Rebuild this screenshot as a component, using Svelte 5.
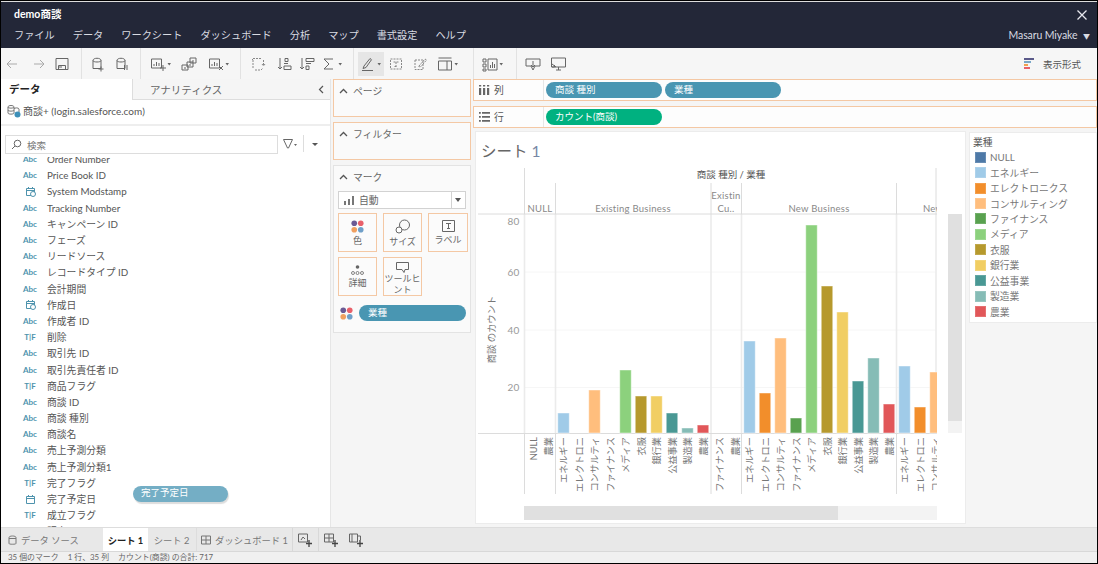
<script>
  const menus = ['ファイル','データ','ワークシート','ダッシュボード','分析','マップ','書式設定','ヘルプ'];
  const tools = [
    {c:12,light:1,d:'M13 8H3M7 4L3 8l4 4'},
    {c:39,light:1,d:'M3 8h10M9 4l4 4-4 4'},
    {c:62,d:'M2 2.5h12v11H2zM4.5 13.5v-4h7v4M5 11h3'},
    {c:81,sep:1},
    {c:98,d:'M3 4.5c0-3 8-3 8 0v8H3zM3 4.5c0 2 8 2 8 0M11 10.5v5M8.5 13h5'},
    {c:122,d:'M3 4.5c0-3 8-3 8 0v8H3zM3 4.5c0 2 8 2 8 0M10.5 9v5M13 9v5'},
    {c:140,sep:1},
    {c:158,caret:1,d:'M1.5 3h10v9h-10zM4 10V8M6.5 10V6M9 10V7M13 9v6M10 12h6'},
    {c:189,d:'M1 9h6v5H1zM6 6h6v5H6zM9 2h6v5H9zM3 12h2M8 9h2M11 5h2'},
    {c:216,caret:1,d:'M1.5 3h10v9h-10zM4 10V8M6.5 10V6M9 10V7M11 10l4 4M15 10l-4 4'},
    {c:240,sep:1},
    {c:258,d:'M3 2.500h9M3 4v8M13.500 4v5M12 8l1.500 2 1.500-2M5 14h5M3 3l-1 1M11 14l2-2',dash:1},
    {c:285,d:'M3 2v11M1 11l2 2 2-2M8 2.500h3v3H8zM7 7.500h4M7 10h7v3.500H7z'},
    {c:307,d:'M3 13V2M1 11l2 2 2-2M7 2.500h8v3H7zM7 7.500h5M7 10h3v3.500H7z'},
    {c:329,caret:1,d:'M12 3H3l5 5-5 5h9'},
    {c:353,sep:1},
    {c:368,active:1,caret:1,d:'M4 10L10 2.500l1.500 1.200L6 11.500l-3 1zM2 14.500h11'},
    {c:396,dash:1,d:'M2.500 3h11v10h-11zM5.500 6h5M8 6v4.500M6.500 10.500h3'},
    {c:421,dash:1,d:'M2 4h8v9.500H2zM6 10l6-7 1.500 1L8 10.500l-2 .5z'},
    {c:445,caret:1,d:'M1.500 2h13M1.500 5h13v9h-13zM10 5v9'},
    {c:473,sep:1},
    {c:490,caret:1,d:'M1 3h3v3H1zM1 8h3v3H1zM1 13h3v2H1zM6 3h9v11H6zM8.500 12V9M10.500 12V6M12.500 12V8'},
    {c:516,sep:1},
    {c:533,d:'M1 3h14v7H10l-2 4-2-4H1zM8 5v6M6 9l2 2 2-2'},
    {c:558,d:'M1.500 2h14v9h-14zM6 14h5M8.500 11v3M2 8l4 3M2 11h2.500V9'}
  ].map((t, i, a) => ({ ...t, gap: i ? t.c - a[i - 1].c - 18 : t.c - 10 }));

  const fields = [
    ['a','Order Number'],['a','Price Book ID'],['d','System Modstamp'],['a','Tracking Number'],['a','キャンペーン ID'],
    ['a','フェーズ'],['a','リードソース'],['a','レコードタイプ ID'],['a','会計期間'],['d','作成日'],['a','作成者 ID'],['t','削除'],
    ['a','取引先 ID'],['a','取引先責任者 ID'],['t','商品フラグ'],['a','商談 ID'],['a','商談 種別'],['a','商談名'],['a','売上予測分類'],
    ['a','売上予測分類1'],['t','完了フラグ'],['c','完了予定日'],['t','成立フラグ'],['a','販売元']
  ];

  const C = { null:'#4e79a7', en:'#a0cbe8', el:'#f28e2b', co:'#ffbe7d', fi:'#59a14f', me:'#8cd17d', ap:'#b6992d', ba:'#f1ce63', pu:'#499894', ma:'#86bcb6', ag:'#e15759' };
  const legend = [['NULL',C.null],['エネルギー',C.en],['エレクトロニクス',C.el],['コンサルティング',C.co],['ファイナンス',C.fi],['メディア',C.me],['衣服',C.ap],['銀行業',C.ba],['公益事業',C.pu],['製造業',C.ma],['農業',C.ag]];

  const short = ['エネルギー','エレクトロニ','コンサルティ','ファイナンス','メディア','衣服','銀行業','公益事業','製造業','農業'];
  const group1 = short.map((label, i) => ({ label, x: 563.5 + 15.5 * i }));
  const group2 = short.map((label, i) => ({ label, x: 749.5 + 15.5 * i }));
  const labels = [
    {label:'NULL',x:533},{label:'農業',x:548.5},...group1,{label:'ファイナンス',x:719},{label:'農業',x:735},...group2,
    {label:'エネルギー',x:904.5},{label:'エレクトロニ',x:920},{label:'コンサルティ',x:935.5}
  ];
  const bars = [
    [563.5,413,C.en],[594.5,390,C.co],[625.5,370,C.me],[641,396,C.ap],[656.5,396,C.ba],[672,413,C.pu],[687.5,428,C.ma],[703,425,C.ag],
    [749.5,341,C.en],[765,393,C.el],[780.5,338,C.co],[796,418,C.fi],[811.500,225,C.me],[827,286,C.ap],[842.500,312,C.ba],[858,381,C.pu],[873.500,358,C.ma],[889,404,C.ag],
    [904.500,366,C.en],[920,407,C.el],[935.500,372,C.co]
  ];
  const swatch = ['#6b5b95','#e8606a','#f0a060','#6f9fc8'];
</script>

{#snippet dots(size)}
  <svg class="dots" width={size} height={size} viewBox="0 0 12 12" aria-hidden="true">
    {#each swatch as col, i}
      <circle cx={i % 2 ? 9 : 3} cy={i < 2 ? 3 : 9} r="2.600" fill={col}/>
    {/each}
  </svg>
{/snippet}

{#snippet chev()}
  <svg class="chev" width="9" height="6" viewBox="0 0 9 6" aria-hidden="true"><path d="M1 5l3.500-3.500L8 5" fill="none" stroke="#555" stroke-width="1.300"/></svg>
{/snippet}

<div class="app">
  <header class="top">
    <div class="title-row"><span class="doc">demo商談</span>
      <svg class="close" width="10" height="10" viewBox="0 0 10 10" aria-hidden="true"><path d="M.5.5l9 9M9.500.5l-9 9" stroke="#e8e8ee" stroke-width="1.300"/></svg>
    </div>
    <div class="menu-row">
      <nav class="menus">{#each menus as m}<span>{m}</span>{/each}</nav>
      <span class="user">Masaru Miyake <i>▼</i></span>
    </div>
  </header>

  <div class="toolbar">
    {#each tools as t}
      {#if t.sep}
        <span class="tool sepbox" style:margin-left="{t.gap}px"><b></b></span>
      {:else}
        <span class="tool" class:active={t.active} style:margin-left="{t.gap}px">
          <svg width="16" height="16" viewBox="0 0 16 16" aria-hidden="true">
            <path d={t.d} fill="none" stroke={t.light ? '#aaa' : t.dash ? '#888' : '#666'} stroke-dasharray={t.dash ? '2 1' : 'none'}/>
            {#if t.caret}<polygon points="17.500,7 21,7 19.200,9.500" fill="#666"/>{/if}
          </svg>
        </span>
      {/if}
    {/each}
    <span class="show-me">
      <svg width="11" height="14" viewBox="0 0 11 14" aria-hidden="true">
        <rect y="1" width="10" height="2" fill="#5b5a8a"/><rect y="4" width="7" height="2" fill="#7aa7c7"/><rect y="7" width="4" height="2" fill="#f0a050"/><rect y="10" width="6" height="2" fill="#e8606a"/>
      </svg>
      表示形式
    </span>
  </div>

  <main class="main">
    <section class="data">
      <div class="tabs">
        <span class="tab-on">データ</span>
        <span class="tab-off">アナリティクス<svg width="6" height="9" viewBox="0 0 6 9" aria-hidden="true"><path d="M5 1L1.500 4.500 5 8" fill="none" stroke="#555" stroke-width="1.200"/></svg></span>
      </div>
      <div class="conn">
        <svg width="14" height="14" viewBox="0 0 14 14" aria-hidden="true"><path d="M1 3c0-2 6-2 6 0v6c0 1.500-6 1.500-6 0zM1 3c0 1.500 6 1.500 6 0M1 6c0 1.500 6 1.500 6 0M7 5c0-1.500 5-1.500 5 0v3M7 7" fill="none" stroke="#777"/><circle cx="10.500" cy="10.500" r="3" fill="#3d8fb8"/></svg>
        <span>商談+ (login.salesforce.com)</span>
      </div>
      <div class="search-row">
        <div class="search">
          <svg width="11" height="11" viewBox="0 0 11 11" aria-hidden="true"><circle cx="6.500" cy="4.500" r="3.300" fill="none" stroke="#666"/><path d="M4 7l-3 3" stroke="#666"/></svg>
          <span>検索</span>
        </div>
        <svg class="funnel" width="14" height="10" viewBox="0 0 14 10" aria-hidden="true"><path d="M.5.500h9L5.500 9h-1z" fill="none" stroke="#666"/><polygon points="11,5 14,5 12.500,7" fill="#666"/></svg>
        <span class="vbar"></span>
        <span class="drop"></span>
      </div>
      <div class="list">
        {#each fields as [kind, name]}
          <div class="field">
            <span class="ficon">
              {#if kind === 'a'}<span class="abc">Abc</span>
              {:else if kind === 't'}<span class="tf">T|F</span>
              {:else}
                <svg width="11" height="11" viewBox="0 0 11 11" aria-hidden="true">
                  <path d="M1.500 2.500h8v7h-8zM1.500 4.500h8M3.500 1v2M7.500 1v2" fill="none" stroke="#4e93ad"/>
                  {#if kind === 'd'}<circle cx="8" cy="8" r="2.500" fill="#fff" stroke="#4e93ad"/>{/if}
                </svg>
              {/if}
            </span>
            <span class="fname">{name}</span>
          </div>
        {/each}
      </div>
      <div class="ghost">完了予定日</div>
    </section>

    <section class="cards">
      <div class="card slim">{@render chev()}<span>ページ</span></div>
      <div class="card slim">{@render chev()}<span>フィルター</span></div>
      <div class="card marks">
        <div class="marks-head">{@render chev()}<span>マーク</span></div>
        <div class="select">
          <svg width="11" height="9" viewBox="0 0 11 9" aria-hidden="true"><path d="M0 5h2v4H0zM4 3h2v6H4zM8 0h2v9H8z" fill="#777"/></svg>
          <span>自動</span><b></b>
        </div>
        <div class="mark-grid">
          <div class="mbtn">{@render dots(13)}<span>色</span></div>
          <div class="mbtn">
            <svg width="16" height="15" viewBox="0 0 16 15" aria-hidden="true"><circle cx="9.500" cy="6" r="5" fill="none" stroke="#666"/><circle cx="4" cy="11" r="3" fill="#fff" stroke="#666"/></svg>
            <span>サイズ</span>
          </div>
          <div class="mbtn">
            <svg width="13" height="12" viewBox="0 0 13 12" aria-hidden="true"><path d="M.5.500h12v11H.5zM4 3.500h5M6.500 3.500v5M5 8.500h3" fill="none" stroke="#666"/></svg>
            <span>ラベル</span>
          </div>
          <div class="mbtn">
            <svg width="13" height="10" viewBox="0 0 13 10" aria-hidden="true"><circle cx="6.500" cy="2" r="1.800" fill="#666"/><circle cx="2" cy="8" r="1.500" fill="none" stroke="#666" stroke-width=".8"/><circle cx="6.500" cy="8" r="1.500" fill="none" stroke="#666" stroke-width=".8"/><circle cx="11" cy="8" r="1.500" fill="none" stroke="#666" stroke-width=".8"/></svg>
            <span>詳細</span>
          </div>
          <div class="mbtn tip">
            <svg width="13" height="11" viewBox="0 0 13 11" aria-hidden="true"><path d="M.5.500h12v7H9l-1 3-2-3H.5z" fill="none" stroke="#666"/></svg>
            <span>ツールヒント</span>
          </div>
        </div>
        <div class="mark-pill">{@render dots(13)}<span class="pill blue">業種</span></div>
      </div>
    </section>

    <section class="right">
      <div class="shelf">
        <div class="shelf-name">
          <svg width="11" height="10" viewBox="0 0 11 10" aria-hidden="true"><path d="M0 3h2.200v7H0zM4 3h2.200v7H4zM8 3h2.200v7H8zM0 0h2.200v1.500H0zM4 0h2.200v1.500H4zM8 0h2.200v1.500H8z" fill="#666"/></svg>
          <span>列</span>
        </div>
        <span class="pill blue wide">商談 種別</span><span class="pill blue wide">業種</span>
      </div>
      <div class="shelf">
        <div class="shelf-name">
          <svg width="11" height="10" viewBox="0 0 11 10" aria-hidden="true"><path d="M0 0h1.800v1.800H0zM3 0h8v1.800H3zM0 4h1.800v1.800H0zM3 4h8v1.800H3zM0 8h1.800v1.800H0zM3 8h8v1.800H3z" fill="#666"/></svg>
          <span>行</span>
        </div>
        <span class="pill green wide">カウント(商談)</span>
      </div>

      <div class="canvas">
        <div class="viz">
          <h1>シート<em>1</em></h1>
          <svg class="chart" width="489" height="374" viewBox="476 149 489 374" role="img" aria-label="商談 種別 / 業種 のカウント">
            <defs><clipPath id="plot"><rect x="476" y="149" width="461" height="374"/></clipPath></defs>
            <g class="grid">
              <path d="M525 272H936M525 330H936M525 387.500H936"/>
            </g>
            <g class="rule-w">
              <path d="M524.500 214V433M555.500 214V433M711 214V433M741.500 214V433M896.500 214V433M936 214V433"/>
            </g>
            <g class="rule">
              <path d="M478 214H937M478 433.500H937M524.500 168V214M555.500 183V214M711 183V214M741.500 183V214M896.500 183V214M936 168V214M524.500 433V494M555.500 433V494M711 433V494M741.500 433V494M896.500 433V494"/>
            </g>
            <g clip-path="url(#plot)">
              {#each bars as [x, top, col]}
                <rect class="bar" x={x - 5.750} y={top} width="11.500" height={433 - top} fill={col}/>
              {/each}
            </g>
            <text class="head dark" x="731" y="178" text-anchor="middle">商談 種別 / 業種</text>
            <text class="head" x="540" y="212" text-anchor="middle">NULL</text>
            <text class="head" x="633" y="212" text-anchor="middle">Existing Business</text>
            <text class="head" x="726" y="199" text-anchor="middle">Existin</text>
            <text class="head" x="726" y="212" text-anchor="middle">Cu..</text>
            <text class="head" x="819" y="212" text-anchor="middle">New Business</text>
            <g clip-path="url(#plot)"><text class="head" x="923" y="212">New</text></g>
            {#each [[80,224.500],[60,275.500],[40,333.500],[20,390.500]] as [v, y]}
              <text class="tick" x="519.500" {y} text-anchor="end">{v}</text>
            {/each}
            <text class="axis" transform="translate(494.500 329.500) rotate(-90)" text-anchor="middle">商談 のカウント</text>
            <g clip-path="url(#plot)">
              {#each labels as l}
                <text class="cat" transform="translate({l.x + 3.500} 437) rotate(-90)" text-anchor="end">{l.label}</text>
              {/each}
            </g>
            <rect x="948" y="214" width="14" height="219" fill="#f3f3f3"/>
            <rect x="948" y="214" width="14" height="207" fill="#e0e0e0"/>
            <rect x="524" y="506" width="413" height="14" fill="#f3f3f3"/>
            <rect x="524" y="506" width="314" height="14" fill="#e0e0e0"/>
          </svg>
        </div>
        <aside class="legend">
          <div class="leg-title">業種</div>
          {#each legend as [name, col]}
            <div class="leg-row"><span class="sw" style:background={col}></span><span>{name}</span></div>
          {/each}
        </aside>
      </div>
    </section>
  </main>

  <footer class="sheets">
    <span class="sh src">
      <svg width="9" height="10" viewBox="0 0 9 10" aria-hidden="true"><path d="M1 2.500c0-2 7-2 7 0v6c0 1-7 1-7 0zM1 3.500h7" fill="none" stroke="#777"/></svg>
      データ ソース
    </span>
    <span class="sh on">シート 1</span>
    <span class="sh s2">シート 2</span>
    <span class="sh dash">
      <svg width="10" height="10" viewBox="0 0 10 10" aria-hidden="true"><path d="M.5 1h9v8h-9zM5 1v8M.5 5h9" fill="none" stroke="#777"/></svg>
      ダッシュボード 1
    </span>
    <span class="add"><svg width="15" height="14" viewBox="0 0 15 14" aria-hidden="true"><path d="M.5 1h9v8h-9zM3 7l2-3 2 2" fill="none" stroke="#666"/><path d="M11 7v7M8 10.500h6" stroke="#444" stroke-width="1.300"/></svg></span>
    <span class="add"><svg width="15" height="14" viewBox="0 0 15 14" aria-hidden="true"><path d="M.5 1h9v8h-9zM5 1v8M.5 5h9" fill="none" stroke="#666"/><path d="M11 7v7M8 10.500h6" stroke="#444" stroke-width="1.300"/></svg></span>
    <span class="add"><svg width="15" height="14" viewBox="0 0 15 14" aria-hidden="true"><path d="M.5 1h8v8h-8zM3 1v8M8.500 3h3v4" fill="none" stroke="#666"/><path d="M11 7v7M8 10.500h6" stroke="#444" stroke-width="1.300"/></svg></span>
  </footer>
  <div class="status"><span>35 個のマーク</span><span>1 行、35 列</span><span>カウント(商談) の合計: 717</span></div>
</div>

<style>
  :global(body) { margin: 0; background: #000; }
  .app {
    width: 1098px; height: 564px; box-sizing: border-box; overflow: hidden;
    display: flex; flex-direction: column; background: #f5f5f5;
    border: 1px solid #000;
    font-family: Lato, "Noto Sans CJK JP", sans-serif; color: #666;
  }
  .top { height: 47px; flex: none; box-sizing: border-box; background: #232738; border-top: 1px solid #ddd; color: #d9dbe2; }
  .title-row { height: 22px; display: flex; align-items: center; justify-content: space-between; padding: 0 10px 0 13px; }
  .doc { font-size: 10.500px; color: #fff; font-weight: 700; }
  .close { margin-top: 4px; }
  .menu-row { display: flex; justify-content: space-between; align-items: center; padding: 3px 7px 0 13px; }
  .menus { display: flex; gap: 18px; font-size: 10.200px; }
  .user { font-size: 10.500px; letter-spacing: -.1px; }
  .user i { font-style: normal; font-size: 7px; margin-left: 3px; }

  .toolbar { height: 31px; flex: none; display: flex; align-items: center; background: #f6f6f6; }
  .tool { width: 18px; height: 24px; flex: none; display: flex; align-items: center; justify-content: center; position: relative; }
  .tool svg { overflow: visible; }
  .active::before { content: ""; position: absolute; left: -1px; right: -7px; top: 0; bottom: 0; background: #e6e6e6; }
  .active svg { position: relative; }
  .sepbox b { width: 1px; height: 31px; background: #e2e2e2; }
  .show-me { margin-left: auto; margin-right: 16px; display: flex; align-items: center; gap: 8px; font-size: 9.500px; color: #555; }

  .main { flex: 1; min-height: 0; display: flex; }
  .data { width: 330px; flex: none; box-sizing: border-box; background: #fff; display: flex; flex-direction: column; position: relative; border-right: 1px solid #e6e6e6; }
  .tabs { height: 21px; flex: none; display: flex; font-size: 10.500px; }
  .tab-on { width: 131px; padding: 0 0 0 8px; box-sizing: border-box; line-height: 20px; font-weight: 700; color: #222; }
  .tab-off { flex: 1; background: #f5f5f5; border-bottom: 1px solid #ddd; border-left: 1px solid #ddd; display: flex; justify-content: space-between; align-items: center; padding: 0 6px 0 17px; color: #666; }
  .conn { height: 26px; flex: none; display: flex; align-items: center; gap: 2px; padding: 0 0 3px 6px; box-sizing: border-box; font-size: 10px; color: #555; border-bottom: 2px solid #eee; }
  .search-row { height: 31px; flex: none; display: flex; align-items: flex-start; padding: 9px 0 0 4px; box-sizing: border-box; }
  .search { width: 273px; height: 19px; box-sizing: border-box; border: 1px solid #ddd; display: flex; align-items: center; gap: 5px; padding-left: 5px; font-size: 9.500px; color: #777; }
  .funnel { margin: 4px 0 0 5px; }
  .vbar { width: 1px; height: 17px; background: #ddd; margin-left: 6px; }
  .drop { width: 0; height: 0; margin: 8px 0 0 8px; border: solid transparent; border-width: 3px 3.500px 0; border-top-color: #555; }
  .list { flex: 1; min-height: 0; overflow: hidden; }
  .field { height: 16.200px; display: flex; align-items: center; font-size: 9.800px; color: #555; }
  .field:first-child { margin-top: -6px; }
  .ficon { width: 46px; padding-left: 12px; box-sizing: border-box; display: flex; justify-content: center; flex: none; }
  .abc { font-size: 8px; font-weight: 700; color: #4e93ad; }
  .tf { font-size: 8px; font-weight: 700; color: #4e93ad; }
  .ghost { position: absolute; left: 132px; top: 407px; width: 95px; height: 16px; box-sizing: border-box; padding-left: 8px; background: #74aec5; border-radius: 8px; color: #fff; font-size: 9.500px; line-height: 14px; box-shadow: 1px 2px 1px #ddd; }

  .cards { width: 138px; flex: none; margin: 0 2px 0 2px; display: flex; flex-direction: column; gap: 5px; }
  .card { box-sizing: border-box; font-size: 9.800px; color: #666; }
  .slim { height: 38px; border: 1px solid #f4c8a4; background: #fafafa; display: flex; align-items: flex-start; gap: 5px; padding: 4px 5px; }
  .chev { flex: none; margin-top: 4px; }
  .marks { height: 168px; border: 1px solid #e3e3e3; background: #fafafa; padding: 4px 4px 0; }
  .marks-head { display: flex; gap: 5px; height: 21px; padding-left: 1px; }
  .select { height: 18px; box-sizing: border-box; border: 1px solid #d2d2d2; background: #fff; display: flex; align-items: center; gap: 4px; padding-left: 5px; position: relative; }
  .select b { position: absolute; right: 0; top: 0; bottom: 0; width: 13px; border-left: 1px solid #d2d2d2; }
  .select b::after { content: ""; position: absolute; left: 3px; top: 6px; border: solid transparent; border-width: 4px 3.500px 0; border-top-color: #555; }
  .mark-grid { display: grid; grid-template-columns: 39px 39px 40px; gap: 5px 6px; margin-top: 4px; }
  .mbtn { height: 39px; box-sizing: border-box; border: 1px solid #f4c8a4; background: #fbfbfb; display: flex; flex-direction: column; align-items: center; justify-content: center; gap: 2px; font-size: 9px; line-height: 11px; overflow: hidden; text-align: center; }
  .tip { justify-content: flex-start; padding-top: 4px; gap: 0; }
  .mark-pill { display: flex; align-items: center; gap: 6px; margin-top: 9px; padding-left: 2px; }
  .pill { height: 16px; border-radius: 8px; color: #fff; font-size: 9.500px; line-height: 15px; padding-left: 9px; box-sizing: border-box; flex: none; }
  .mark-pill .pill { flex: 1; }
  .blue { background: #4996b2; }
  .green { background: #00b180; }
  .wide { width: 116px; margin-right: 3px; }

  .right { flex: 1; min-width: 0; display: flex; flex-direction: column; gap: 5px; }
  .shelf { height: 22px; flex: none; box-sizing: border-box; border: 1px solid #f4c8a4; background: #fdfdfd; display: flex; align-items: center; }
  .shelf-name { width: 70px; height: 100%; flex: none; box-sizing: border-box; border-right: 1px solid #e6e6e6; margin-right: 2px; display: flex; align-items: center; gap: 4px; padding-left: 5px; font-size: 9.800px; color: #555; }
  .canvas { flex: 1; min-height: 0; margin-top: -1px; display: flex; align-items: flex-start; gap: 5px; padding-left: 3px; }
  .viz { width: 489px; height: 391px; background: #fff; box-shadow: 0 0 0 1px #ececec; flex: none; }
  .viz h1 { margin: 0; height: 15px; padding: 2px 0 0 5px; font-size: 15.500px; font-weight: 400; line-height: 34px; color: #666; white-space: nowrap; }
  .viz h1 em { font-style: normal; color: #7787a5; margin-left: 4px; }
  .chart { display: block; }
  .grid path { stroke: #f6f6f6; fill: none; }
  .rule-w path { stroke: #ebebeb; stroke-width: 1.600; fill: none; }
  .rule path { stroke: #dcdcdc; fill: none; }
  .bar { stroke: #fff; stroke-opacity: .45; }
  .head { font-size: 9.500px; fill: #888; letter-spacing: .25px; }
  .dark { fill: #555; letter-spacing: 0; }
  .axis { font-size: 9.300px; fill: #777; }
  .tick { font-size: 10px; fill: #999; letter-spacing: .2px; }
  .cat { font-size: 9.200px; fill: #777; }
  .legend { width: 126px; height: 189px; margin-top: 1px; box-sizing: border-box; background: #fff; box-shadow: 0 0 0 1px #ececec; padding: 3px 0 0 3px; font-size: 9.800px; color: #777; flex: none; }
  .leg-title { height: 13.500px; line-height: 13px; color: #555; }
  .leg-row { height: 15.450px; display: flex; align-items: center; gap: 4px; padding-left: 2px; white-space: nowrap; }
  .sw { width: 11px; height: 11px; flex: none; box-shadow: inset 0 0 0 1px rgba(255,255,255,.15); }

  .sheets { height: 24px; flex: none; display: flex; align-items: stretch; background: #e8e8e8; border-top: 1px solid #ddd; box-sizing: border-box; font-size: 9.300px; color: #777; }
  .sh { display: flex; align-items: center; gap: 4px; white-space: nowrap; }
  .src { width: 102px; padding-left: 7px; box-sizing: border-box; }
  .on { width: 45px; justify-content: center; background: #fff; color: #222; font-weight: 700; }
  .s2 { width: 47px; justify-content: center; }
  .dash { width: 97px; justify-content: center; border-left: 1px solid #ddd; border-right: 1px solid #d8d8d8; box-sizing: border-box; margin-left: 1px; }
  .add { width: 25px; display: flex; align-items: center; justify-content: center; }
  .add:nth-of-type(5) { border-right: 1px solid #d8d8d8; }
  .status { height: 11px; flex: none; display: flex; gap: 9px; padding-left: 7px; background: #f0f0f0; border-top: 1px solid #d8d8d8; font-size: 7.900px; line-height: 10px; color: #666; }
</style>
